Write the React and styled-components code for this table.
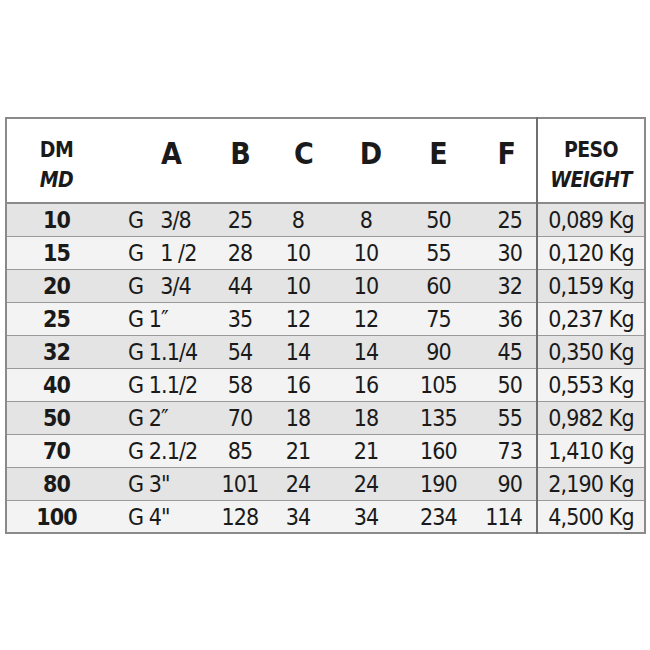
import React from 'react'
import styled, { createGlobalStyle } from 'styled-components'

const GlobalStyle = createGlobalStyle`
	body {
		margin: 0;
		background: #fff;
		font-family: "DejaVu Sans Condensed", "Liberation Sans Narrow", "Liberation Sans", sans-serif;
		font-stretch: condensed;
		color: #1a1a1a;
	}
`

const Page = styled.div`
	width: 650px;
	height: 650px;
	padding: 117px 0 0 5px;
	box-sizing: border-box;
`

const Table = styled.table`
	width: 639px;
	border-collapse: collapse;
	border: 2px solid #8a8a8a;
	table-layout: fixed;
`

const HeadRow = styled.tr`
	height: 85px;
	background: #fff;
	border-bottom: 2px solid #8a8a8a;
`

const Row = styled.tr`
	height: 33px;
	background: ${p => (p.$dark ? '#e4e4e4' : '#f3f3f3')};
	border-bottom: 1px solid #9a9a9a;
`

const Cell = styled.td`
	padding: 2px ${p => p.$pr || 0}px 0 ${p => p.$pl || 0}px;
	text-align: ${p => p.$align || 'center'};
	font-size: 23px;
	letter-spacing: -0.9px;
	font-weight: ${p => (p.$bold ? 700 : 400)};
	line-height: 1;
	white-space: pre;
	border-left: ${p => (p.$divider ? '2px solid #6f6f6f' : 'none')};
`

const Head = styled.th`
	padding: ${p => (p.$stack ? '8px' : '0')} ${p => p.$pr || 0}px ${p => (p.$stack ? '0' : '14px')} ${p => p.$pl || 0}px;
	text-align: ${p => p.$align || 'center'};
	font-size: 30px;
	font-weight: 900;
	line-height: 1;
	vertical-align: middle;
	border-left: ${p => (p.$divider ? '2px solid #6f6f6f' : 'none')};
`

const Label = styled.div`
	font-size: 21px;
	font-weight: 700;
	letter-spacing: -0.6px;
	line-height: 30px;
	font-style: ${p => (p.$italic ? 'italic' : 'normal')};
`

const cols = [100, 100, 65, 60, 70, 75, 61, 108]

const rows = [
	['10', 'G   3/8', '25', '8', '8', '50', '25', '0,089 Kg'],
	['15', 'G   1 /2', '28', '10', '10', '55', '30', '0,120 Kg'],
	['20', 'G   3/4', '44', '10', '10', '60', '32', '0,159 Kg'],
	['25', 'G 1\u2033', '35', '12', '12', '75', '36', '0,237 Kg'],
	['32', 'G 1.1/4', '54', '14', '14', '90', '45', '0,350 Kg'],
	['40', 'G 1.1/2', '58', '16', '16', '105', '50', '0,553 Kg'],
	['50', 'G 2\u2033', '70', '18', '18', '135', '55', '0,982 Kg'],
	['70', 'G 2.1/2', '85', '21', '21', '160', '73', '1,410 Kg'],
	['80', 'G 3"', '101', '24', '24', '190', '90', '2,190 Kg'],
	['100', 'G 4"', '128', '34', '34', '234', '114', '4,500 Kg'],
]

export default function App() {
	return (
		<Page>
			<GlobalStyle />
			<Table>
				<colgroup>
					{cols.map((w, i) => <col key={i} style={{ width: w }} />)}
				</colgroup>
				<thead>
					<HeadRow>
						<Head $stack>
							<Label>DM</Label>
							<Label $italic>MD</Label>
						</Head>
						<Head $align="left" $pl={55}>A</Head>
						<Head $pl={4}>B</Head>
						<Head $pl={6}>C</Head>
						<Head $pl={10}>D</Head>
						<Head>E</Head>
						<Head $align="right" $pr={20}>F</Head>
						<Head $stack $divider>
							<Label>PESO</Label>
							<Label $italic>WEIGHT</Label>
						</Head>
					</HeadRow>
				</thead>
				<tbody>
					{rows.map((r, i) => (
						<Row key={r[0]} $dark={i % 2 === 0}>
							<Cell $bold>{r[0]}</Cell>
							<Cell $align="left" $pl={22}>{r[1]}</Cell>
							<Cell $pl={3}>{r[2]}</Cell>
							<Cell $pr={6}>{r[3]}</Cell>
							<Cell>{r[4]}</Cell>
							<Cell>{r[5]}</Cell>
							<Cell $align="right" $pr={14}>{r[6]}</Cell>
							<Cell $divider>{r[7]}</Cell>
						</Row>
					))}
				</tbody>
			</Table>
		</Page>
	)
}
